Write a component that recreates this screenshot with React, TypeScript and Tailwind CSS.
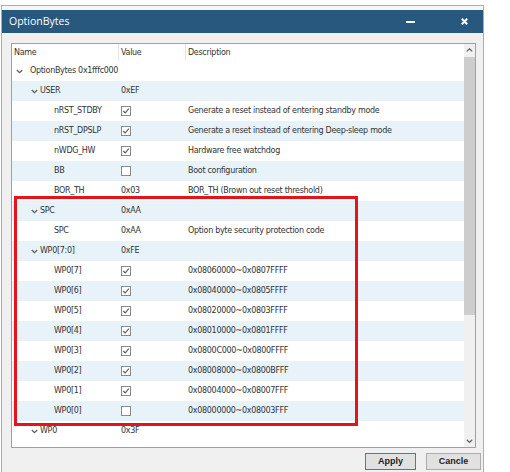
import type { ReactNode } from "react";

type Row = {
  name: string;
  level: 0 | 1 | 2;
  value?: string;
  check?: boolean;
  desc?: string;
};

const rows: Row[] = [
  { name: "OptionBytes 0x1fffc000", level: 0 },
  { name: "USER", level: 1, value: "0xEF" },
  { name: "nRST_STDBY", level: 2, check: true, desc: "Generate a reset instead of entering standby mode" },
  { name: "nRST_DPSLP", level: 2, check: true, desc: "Generate a reset instead of entering Deep-sleep mode" },
  { name: "nWDG_HW", level: 2, check: true, desc: "Hardware free watchdog" },
  { name: "BB", level: 2, check: false, desc: "Boot configuration" },
  { name: "BOR_TH", level: 2, value: "0x03", desc: "BOR_TH (Brown out reset threshold)" },
  { name: "SPC", level: 1, value: "0xAA" },
  { name: "SPC", level: 2, value: "0xAA", desc: "Option byte security protection code" },
  { name: "WP0[7:0]", level: 1, value: "0xFE" },
  { name: "WP0[7]", level: 2, check: true, desc: "0x08060000~0x0807FFFF" },
  { name: "WP0[6]", level: 2, check: true, desc: "0x08040000~0x0805FFFF" },
  { name: "WP0[5]", level: 2, check: true, desc: "0x08020000~0x0803FFFF" },
  { name: "WP0[4]", level: 2, check: true, desc: "0x08010000~0x0801FFFF" },
  { name: "WP0[3]", level: 2, check: true, desc: "0x0800C000~0x0800FFFF" },
  { name: "WP0[2]", level: 2, check: true, desc: "0x08008000~0x0800BFFF" },
  { name: "WP0[1]", level: 2, check: true, desc: "0x08004000~0x08007FFF" },
  { name: "WP0[0]", level: 2, check: false, desc: "0x08000000~0x08003FFF" },
  { name: "WP0", level: 1, value: "0x3F" },
];

function Chevron() {
  return (
    <svg width="7" height="5" viewBox="0 0 7 5" className="shrink-0">
      <polyline points="0.8,1 3.5,3.6 6.2,1" fill="none" stroke="#5a5a5a" strokeWidth="1.2" />
    </svg>
  );
}

function Check({ on }: { on: boolean }) {
  return (
    <div className="flex h-[10px] w-[10px] items-center justify-center border border-[#8a8a8a] bg-white">
      {on && (
        <svg width="8" height="8" viewBox="0 0 8 8">
          <polyline points="1.2,4 3.2,6 6.8,1.6" fill="none" stroke="#555" strokeWidth="1.1" />
        </svg>
      )}
    </div>
  );
}

function NameCell({ row }: { row: Row }) {
  const pad = row.level === 0 ? "pl-[4px]" : row.level === 1 ? "pl-[19px]" : "pl-[42px]";
  let inner: ReactNode;
  if (row.level === 2) {
    inner = <span>{row.name}</span>;
  } else {
    inner = (
      <>
        <Chevron />
        <span className={row.level === 0 ? "ml-[7px]" : "ml-[2px]"}>{row.name}</span>
      </>
    );
  }
  return <div className={`flex w-[106px] shrink-0 items-center whitespace-nowrap ${pad}`}>{inner}</div>;
}

export default function App() {
  return (
    <div
      className="relative h-[472px] w-[510px] overflow-hidden bg-white text-[#333]"
      style={{ fontFamily: "'DejaVu Sans', Verdana, sans-serif" }}
    >
      <div className="ml-[1px] mt-[5px] flex h-[480px] w-[483px] flex-col border border-[#adadad] bg-[#f0f0f0]">
        <div className="h-[4px] bg-[#f6f6f6]" />
        <div
          className="flex h-[23px] items-center bg-[#28587e] pl-[7px] pr-[15px] text-[10.5px] text-white"
          style={{ fontFamily: "'Open Sans', 'Noto Sans', sans-serif" }}
        >
          <span>OptionBytes</span>
          <div className="ml-auto mr-[46px] h-[2px] w-[9px] bg-white" />
          <svg width="7" height="7" viewBox="0 0 7 7">
            <path d="M0.8 0.8 L6.2 6.2 M6.2 0.8 L0.8 6.2" stroke="white" strokeWidth="2" />
          </svg>
        </div>

        <div className="pl-[9px] pt-[10px]">
          <div className="flex h-[405px] w-[465px] border border-[#a0a0a0] bg-white text-[8px] tracking-[-0.3px]">
            <div className="flex-1">
              <div className="flex h-[17px] items-center text-[#333]">
                <div className="w-[106px] pl-[2px]">Name</div>
                <div className="h-full w-px bg-[#e5e5e5]" />
                <div className="w-[66px] pl-[2px]">Value</div>
                <div className="h-full w-px bg-[#e5e5e5]" />
                <div className="pl-[2px]">Description</div>
              </div>
              {rows.map((row, i) => (
                <div
                  key={i}
                  className={`flex h-[20px] items-center ${i % 2 === 1 ? "bg-[#e8f2f9]" : "bg-white"}`}
                >
                  <NameCell row={row} />
                  <div className="flex w-[67px] shrink-0 items-center pl-[3px]">
                    {row.check !== undefined ? <Check on={row.check} /> : <span>{row.value}</span>}
                  </div>
                  <div className="whitespace-nowrap pl-[3px]">{row.desc}</div>
                </div>
              ))}
            </div>
            <div className="flex w-[11px] flex-col bg-[#f0f0f0]">
              <div className="flex h-[12px] items-center justify-center">
                <svg width="7" height="4" viewBox="0 0 7 4">
                  <polyline points="0.8,3.4 3.5,0.8 6.2,3.4" fill="none" stroke="#606060" strokeWidth="1.2" />
                </svg>
              </div>
              <div className="mt-[1px] h-[258px] bg-[#cdcdcd]" />
              <div className="flex-1" />
              <div className="flex h-[12px] items-center justify-center">
                <svg width="7" height="4" viewBox="0 0 7 4">
                  <polyline points="0.8,0.8 3.5,3.4 6.2,0.8" fill="none" stroke="#606060" strokeWidth="1.2" />
                </svg>
              </div>
            </div>
          </div>

          <div
            className="mt-[5px] flex justify-end gap-[10px] pr-[2px] text-[9px] font-bold text-[#222]"
            style={{ fontFamily: "'Liberation Sans', Arial, sans-serif" }}
          >
            <div className="flex h-[17px] w-[51px] items-center justify-center border border-[#3c7fb1] bg-[#e1e1e1]">
              Apply
            </div>
            <div className="flex h-[17px] w-[55px] items-center justify-center border border-[#adadad] bg-[#e1e1e1]">
              Cancle
            </div>
          </div>
        </div>
      </div>

      <div className="pointer-events-none absolute left-[14px] top-[196px] h-[230px] w-[344px] border-[3px] border-[#e3141c]" />
    </div>
  );
}
